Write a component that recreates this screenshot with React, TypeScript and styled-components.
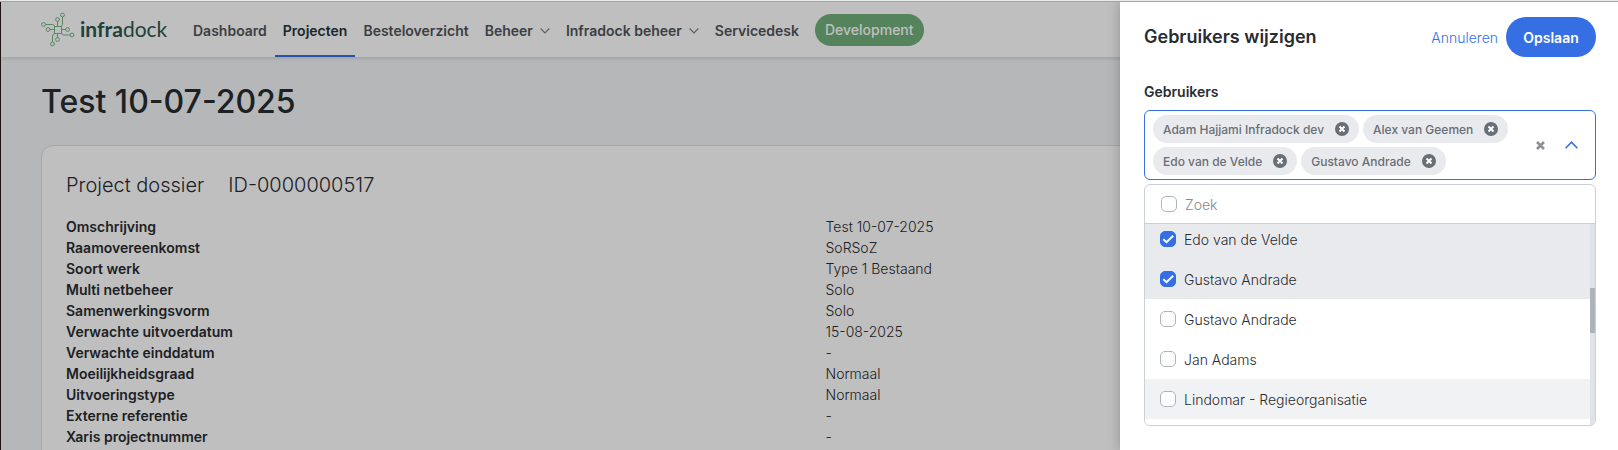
import React, { useLayoutEffect, useRef } from 'react';
import styled, { createGlobalStyle } from 'styled-components';

const GlobalStyle = createGlobalStyle`
  *, *::before, *::after { box-sizing: border-box; }
  html, body, #root { height: 100%; }
  body {
    margin: 0;
    overflow: hidden;
    background: #f2f5f7;
    color: #292c31;
    font: 300 14px/21px Inter, "Noto Sans", sans-serif;
  }
  button, input { font: inherit; color: inherit; }
`;

const Window = styled.div`
  display: flex;
  flex-direction: column;
  height: 100vh;
  overflow: hidden;
`;

const TabEdge = styled.div`
  flex: none;
  height: 2px;
  background: #e7e9e8;
  border-bottom: 1px solid #a3a6a4;
`;

const Viewport = styled.div`
  position: relative;
  flex: 1;
  min-height: 0;
  overflow: hidden;
  border-left: 1px solid #1c1412;
`;

const Header = styled.header`
  display: flex;
  height: 55px;
  padding-left: 40px;
  background: #fff;
  box-shadow: 0 1px 4px rgba(0, 0, 0, 0.16);
`;

const Logo = styled.a`
  display: flex;
  align-items: center;
  gap: 5px;
  width: 144px;
  color: #2d5750;
  text-decoration: none;
  font: 400 21px/28px Lato, sans-serif;

  b { font-weight: 700; }
`;

const LogoName = styled.span`
  padding-bottom: 2px;
`;

const Nav = styled.nav`
  display: flex;
  align-items: stretch;
`;

const NavLink = styled.a<{ $active?: boolean }>`
  display: flex;
  align-items: center;
  gap: 7px;
  padding: 4px 8px 0;
  border-bottom: 2px solid ${p => (p.$active ? '#366fe4' : 'transparent')};
  color: ${p => (p.$active ? '#22353c' : '#4f545b')};
  font-weight: 600;
  text-decoration: none;
  white-space: nowrap;
`;

const Environment = styled.span`
  align-self: center;
  margin-left: 8px;
  padding: 5px 10px 6px;
  border-radius: 16px;
  background: #71af7b;
  color: #fff;
  font-weight: 500;
`;

const Main = styled.main`
  padding: 25px 8px 0 40px;
`;

const PageTitle = styled.h1`
  margin: 0 0 23px;
  font-size: 32px;
  line-height: 40px;
  font-weight: 500;
`;

const Card = styled.section`
  min-height: 400px;
  padding: 28px 24px;
  border: 1px solid #dbdfe4;
  border-radius: 12px;
  background: #fff;
`;

const CardTitle = styled.h2`
  display: flex;
  gap: 24px;
  margin: 0 0 20px;
  font-size: 20px;
  line-height: 22px;
  font-weight: 300;
`;

const Details = styled.dl`
  display: grid;
  grid-template-columns: 1fr 1fr;
  margin: 0;

  dt { font-weight: 600; }
  dd { margin: 0; }
`;

const Backdrop = styled.div`
  position: absolute;
  inset: 0;
  background: rgba(0, 0, 0, 0.25);
`;

const Drawer = styled.aside`
  position: absolute;
  top: 0;
  right: 0;
  bottom: 0;
  width: 498px;
  padding: 15px 22px 0 24px;
  background: #fff;
  box-shadow: 0 0 12px rgba(0, 0, 0, 0.25);
`;

const DrawerHeader = styled.div`
  display: flex;
  align-items: center;
  gap: 8px;
  margin-bottom: 24px;
`;

const DrawerTitle = styled.h2`
  flex: 1;
  margin: 0;
  font-size: 18px;
  line-height: 24px;
  font-weight: 600;
`;

const LinkButton = styled.button`
  padding: 0;
  border: 0;
  background: none;
  color: #366fe4;
`;

const PrimaryButton = styled.button`
  width: 90px;
  height: 40px;
  padding: 0;
  border: 0;
  border-radius: 20px;
  background: #366fe4;
  color: #fff;
  font-weight: 600;
`;

const FieldLabel = styled.div`
  margin-bottom: 8px;
  font-weight: 600;
`;

const MultiSelect = styled.div`
  display: flex;
  align-items: center;
  padding: 4px 17px 4px 8px;
  border: 1px solid #366fe4;
  border-radius: 6px;
`;

const Chips = styled.div`
  display: flex;
  flex: 1;
  flex-wrap: wrap;
  gap: 4px;
`;

const Chip = styled.span`
  display: flex;
  align-items: center;
  gap: 11px;
  height: 28px;
  padding: 0 10px;
  border-radius: 14px;
  background: #e9eaee;
  color: #686e75;
  font-size: 12px;
  font-weight: 500;
`;

const IconButton = styled.button`
  display: flex;
  padding: 0;
  border: 0;
  background: none;
`;

const Toggles = styled.div`
  display: flex;
  align-items: center;
  gap: 20px;
`;

const Dropdown = styled.div`
  display: flex;
  flex-direction: column;
  height: 242px;
  margin-top: 4px;
  overflow: hidden;
  border: 1px solid #cbcfd6;
  border-radius: 6px;
  background: #fff;
`;

const SearchRow = styled.div`
  display: flex;
  flex: none;
  align-items: center;
  gap: 8px;
  height: 39px;
  padding: 0 16px;
  border-bottom: 1px solid #cbcfd6;
`;

const SearchInput = styled.input`
  flex: 1;
  min-width: 0;
  padding: 0;
  border: 0;
  outline: 0;
  background: none;

  &::placeholder { color: #888; opacity: 1; }
`;

const Checkbox = styled.input`
  appearance: none;
  flex: none;
  width: 16px;
  height: 16px;
  margin: 0;
  border: 1px solid #adb4be;
  border-radius: 5px;
  background: #fff;

  &:checked {
    border-color: #366fe4;
    background: #366fe4;
  }
`;

const CheckBoxWrap = styled.span`
  position: relative;
  display: flex;

  svg {
    position: absolute;
    inset: 0;
    pointer-events: none;
  }
`;

const ListArea = styled.div`
  display: flex;
  flex: 1;
  min-height: 0;
`;

const Options = styled.div`
  flex: 1;
  overflow: hidden;
`;

const Option = styled.label<{ $tone?: string }>`
  display: flex;
  align-items: center;
  gap: 8px;
  height: 40px;
  padding: 0 15px;
  background: ${p => p.$tone ?? '#fff'};
`;

const ScrollTrack = styled.div`
  width: 5px;
  padding-top: 64px;
  background: #dfe2e6;
`;

const ScrollThumb = styled.div`
  height: 45px;
  background: #adb3bb;
`;

const LogoMark = () => (
  <svg width="34" height="35" viewBox="0 0 34 35" fill="none" stroke="#75b683" strokeWidth="1">
    <rect x="13.5" y="14.5" width="7" height="7" />
    <circle cx="21.500" cy="3" r="1.900" />
    <circle cx="16.500" cy="7.500" r="1.900" />
    <circle cx="2.500" cy="12.500" r="1.900" />
    <circle cx="7" cy="17.500" r="1.900" />
    <circle cx="26.500" cy="17.500" r="1.900" />
    <circle cx="31" cy="23" r="1.900" />
    <circle cx="16.500" cy="27.500" r="1.900" />
    <circle cx="11.500" cy="32" r="1.900" />
    <path d="M21.500 5v7.500q0 1-1.500 2M16.500 9.500v5M4.500 12.500h7q1.500 0 2 2M9 17.500h4.500M20.500 17.500h4M20.500 21q.5 2 2 2h6.500M16.500 21.500v4M14 21.500q-2.500.5-2.500 2.500v6" />
  </svg>
);

const Chevron = ({ size = 10, up = false }: { size?: number; up?: boolean }) => (
  <svg width={size} height={size} viewBox="0 0 12 12" fill="none" stroke={up ? '#366fe4' : '#7a7f86'} strokeWidth={up ? 1.5 : 1.4}>
    <path d={up ? 'M.6 8.500 6 3l5.400 5.500' : 'M.8 3l5.200 5.300L11.200 3'} />
  </svg>
);

const RemoveIcon = () => (
  <svg width="14" height="14" viewBox="0 0 14 14">
    <circle cx="7" cy="7" r="7" fill="#686e75" />
    <path d="M4.500 4.500l5 5M9.500 4.500l-5 5" stroke="#fff" strokeWidth="2" />
  </svg>
);

const ClearIcon = () => (
  <svg width="9" height="9" viewBox="0 0 9 9">
    <path d="M1 1l7 7M8 1l-7 7" stroke="#8d9196" strokeWidth="2.600" />
  </svg>
);

const TickIcon = () => (
  <svg width="16" height="16" viewBox="0 0 16 16" fill="none" stroke="#fff" strokeWidth="2">
    <path d="M3.300 8.200l3.200 3 6.700-6.500" />
  </svg>
);

const navItems = [
  { label: 'Dashboard' },
  { label: 'Projecten', active: true },
  { label: 'Besteloverzicht' },
  { label: 'Beheer', menu: true },
  { label: 'Infradock beheer', menu: true },
  { label: 'Servicedesk' },
];

const details = [
  ['Omschrijving', 'Test 10-07-2025'],
  ['Raamovereenkomst', 'SoRSoZ'],
  ['Soort werk', 'Type 1 Bestaand'],
  ['Multi netbeheer', 'Solo'],
  ['Samenwerkingsvorm', 'Solo'],
  ['Verwachte uitvoerdatum', '15-08-2025'],
  ['Verwachte einddatum', '-'],
  ['Moeilijkheidsgraad', 'Normaal'],
  ['Uitvoeringstype', 'Normaal'],
  ['Externe referentie', '-'],
  ['Xaris projectnummer', '-'],
];

const selected = ['Adam Hajjami Infradock dev', 'Alex van Geemen', 'Edo van de Velde', 'Gustavo Andrade'];

const options = [
  { name: 'Edo van de Velde', checked: true, tone: '#e9eaee' },
  { name: 'Gustavo Andrade', checked: true, tone: '#e9eaee' },
  { name: 'Gustavo Andrade' },
  { name: 'Jan Adams' },
  { name: 'Lindomar - Regieorganisatie', tone: '#f1f2f4' },
];

export default function App() {
  const list = useRef<HTMLDivElement>(null);

  useLayoutEffect(() => {
    if (list.current) list.current.scrollTop = 5;
  }, []);

  return (
    <Window>
      <GlobalStyle />
      <TabEdge />
      <Viewport>
        <Header>
          <Logo href="#">
            <LogoMark />
            <LogoName><b>infra</b>dock</LogoName>
          </Logo>
          <Nav>
            {navItems.map(item => (
              <NavLink key={item.label} href="#" $active={item.active}>
                {item.label}
                {item.menu && <Chevron />}
              </NavLink>
            ))}
            <Environment>Development</Environment>
          </Nav>
        </Header>
        <Main>
          <PageTitle>Test 10-07-2025</PageTitle>
          <Card>
            <CardTitle>
              <span>Project dossier</span>
              <span>ID-0000000517</span>
            </CardTitle>
            <Details>
              {details.map(([term, value]) => (
                <React.Fragment key={term}>
                  <dt>{term}</dt>
                  <dd>{value}</dd>
                </React.Fragment>
              ))}
            </Details>
          </Card>
        </Main>
        <Backdrop />
        <Drawer>
          <DrawerHeader>
            <DrawerTitle>Gebruikers wijzigen</DrawerTitle>
            <LinkButton type="button">Annuleren</LinkButton>
            <PrimaryButton type="button">Opslaan</PrimaryButton>
          </DrawerHeader>
          <FieldLabel id="users-label">Gebruikers</FieldLabel>
          <MultiSelect role="group" aria-labelledby="users-label">
            <Chips>
              {selected.map(name => (
                <Chip key={name}>
                  {name}
                  <IconButton type="button" aria-label={name}><RemoveIcon /></IconButton>
                </Chip>
              ))}
            </Chips>
            <Toggles>
              <IconButton type="button" aria-label="Gebruikers"><ClearIcon /></IconButton>
              <IconButton type="button" aria-label="Gebruikers" aria-expanded="true"><Chevron up size={13} /></IconButton>
            </Toggles>
          </MultiSelect>
          <Dropdown>
            <SearchRow>
              <Checkbox type="checkbox" aria-label="Gebruikers" />
              <SearchInput type="text" placeholder="Zoek" aria-label="Zoek" />
            </SearchRow>
            <ListArea>
              <Options ref={list}>
                {options.map((option, index) => (
                  <Option key={index} $tone={option.tone}>
                    <CheckBoxWrap>
                      <Checkbox type="checkbox" defaultChecked={option.checked} />
                      {option.checked && <TickIcon />}
                    </CheckBoxWrap>
                    {option.name}
                  </Option>
                ))}
                <Option as="div" />
              </Options>
              <ScrollTrack><ScrollThumb /></ScrollTrack>
            </ListArea>
          </Dropdown>
        </Drawer>
      </Viewport>
    </Window>
  );
}
